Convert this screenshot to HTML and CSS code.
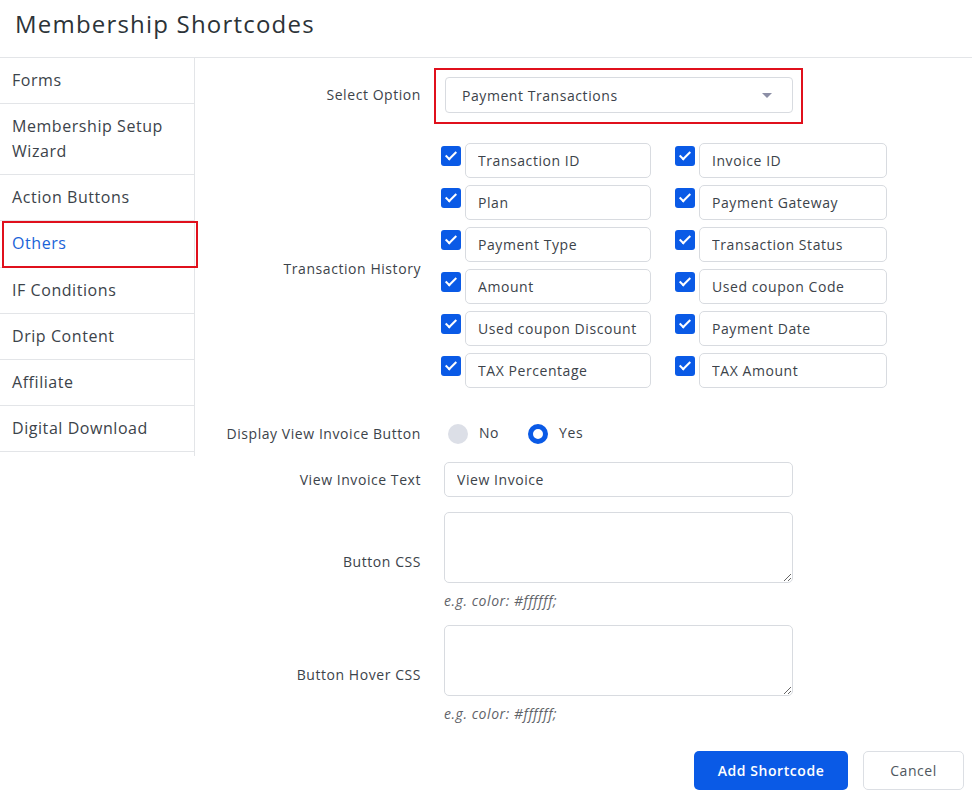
FILE: index.html
```html
<!DOCTYPE html>
<html>
<head>
    <title>Membership Shortcodes</title>
    <link rel="stylesheet" href="styles.css">
</head>
<body>
    <div class="header">
        <h1>Membership Shortcodes</h1>
    </div>
    <div class="layout">
        <ul class="side-menu">
            <li>Forms</li>
            <li>Membership Setup Wizard</li>
            <li>Action Buttons</li>
            <li class="active">Others</li>
            <li>IF Conditions</li>
            <li>Drip Content</li>
            <li>Affiliate</li>
            <li>Digital Download</li>
        </ul>

        <div class="panel">
            <div class="row">
                <label class="row-label">Select Option</label>
                <div class="field">
                    <div class="highlight">
                        <div class="select">
                            <span>Payment Transactions</span>
                            <span class="arrow"></span>
                        </div>
                    </div>
                </div>
            </div>

            <div class="row row-history">
                <label class="row-label">Transaction History</label>
                <div class="field">
                    <div class="check-grid">
                        <div class="check-item"><span class="checkbox"></span><input type="text" value="Transaction ID"></div>
                        <div class="check-item"><span class="checkbox"></span><input type="text" value="Invoice ID"></div>
                        <div class="check-item"><span class="checkbox"></span><input type="text" value="Plan"></div>
                        <div class="check-item"><span class="checkbox"></span><input type="text" value="Payment Gateway"></div>
                        <div class="check-item"><span class="checkbox"></span><input type="text" value="Payment Type"></div>
                        <div class="check-item"><span class="checkbox"></span><input type="text" value="Transaction Status"></div>
                        <div class="check-item"><span class="checkbox"></span><input type="text" value="Amount"></div>
                        <div class="check-item"><span class="checkbox"></span><input type="text" value="Used coupon Code"></div>
                        <div class="check-item"><span class="checkbox"></span><input type="text" value="Used coupon Discount"></div>
                        <div class="check-item"><span class="checkbox"></span><input type="text" value="Payment Date"></div>
                        <div class="check-item"><span class="checkbox"></span><input type="text" value="TAX Percentage"></div>
                        <div class="check-item"><span class="checkbox"></span><input type="text" value="TAX Amount"></div>
                    </div>
                </div>
            </div>

            <div class="row row-radio">
                <label class="row-label">Display View Invoice Button</label>
                <div class="field radios">
                    <span class="radio"></span><span class="radio-text">No</span>
                    <span class="radio checked"></span><span class="radio-text">Yes</span>
                </div>
            </div>

            <div class="row row-text">
                <label class="row-label">View Invoice Text</label>
                <div class="field">
                    <input type="text" class="wide" value="View Invoice">
                </div>
            </div>

            <div class="row row-area">
                <label class="row-label">Button CSS</label>
                <div class="field">
                    <textarea></textarea>
                    <p class="hint">e.g. color: #ffffff;</p>
                </div>
            </div>

            <div class="row row-area">
                <label class="row-label">Button Hover CSS</label>
                <div class="field">
                    <textarea></textarea>
                    <p class="hint">e.g. color: #ffffff;</p>
                </div>
            </div>

            <div class="actions">
                <button class="btn-primary">Add Shortcode</button>
                <button class="btn-default">Cancel</button>
            </div>
        </div>
    </div>
</body>
</html>
```

FILE: styles.css
```css
body { margin: 0; font-family: "Open Sans", "Noto Sans", sans-serif; letter-spacing: 0.035em; color: #3c434a; background: #fff; }
.header { border-bottom: 1px solid #e3e5e8; height: 57px; }
.header h1 { margin: 0; padding: 7px 15px 0; font-size: 24px; font-weight: 400; line-height: 34px; letter-spacing: 0.05em; color: #2c3338; }

.layout { display: flex; align-items: flex-start; }

.side-menu { list-style: none; margin: 0; padding: 0 0 4px; width: 194px; border-right: 1px solid #e3e5e8; flex-shrink: 0; }
.side-menu li { position: relative; padding: 10px 12px; font-size: 16px; line-height: 25px; border-bottom: 1px solid #e3e5e8; color: #3c434a; }
.side-menu li.active { color: #1a63d8; padding-bottom: 11px; }
.side-menu li.active::after { content: ""; position: absolute; left: 2px; top: 0; right: -4px; bottom: -1px; border: 2px solid #e0101c; }

.panel { flex: 1; padding: 10px 8px 0 0; }
.row { display: grid; grid-template-columns: 226px 1fr; column-gap: 23px; align-items: center; }
.row-label { text-align: right; font-size: 14px; color: #3c434a; }
.field { min-width: 0; }

.highlight { display: inline-block; margin-left: -10px; padding: 7px 8px 9px 9px; border: 2px solid #e0101c; }
.select { width: 348px; height: 36px; box-sizing: border-box; border: 1px solid #d8dbe0; border-radius: 4px; padding: 0 16px; display: flex; align-items: center; justify-content: space-between; font-size: 14px; }
.arrow { width: 0; height: 0; border-left: 5px solid transparent; border-right: 5px solid transparent; border-top: 5px solid #8c8fa6; margin-right: 4px; }
.row:first-child .row-label { padding-bottom: 4px; }

.row-history { margin-top: 19px; }
.row-history .row-label { padding-top: 6px; }
.check-grid { margin-left: -3px; display: grid; grid-template-columns: 210px 212px; column-gap: 24px; row-gap: 7px; }
.check-item { display: flex; align-items: flex-start; gap: 4px; }
.checkbox { width: 20px; height: 20px; margin-top: 3px; border-radius: 3px; background: #0a5ae6; flex-shrink: 0; position: relative; }
.checkbox::after { content: ""; position: absolute; left: 7px; top: 3px; width: 4px; height: 9px; border: solid #fff; border-width: 0 2.5px 2.5px 0; transform: rotate(45deg); }

input[type="text"], textarea { font-family: inherit; letter-spacing: inherit; font-size: 14px; color: #3c434a; border: 1px solid #d8dbe0; border-radius: 5px; box-sizing: border-box; background: #fff; }
.check-item input { width: 100%; height: 35px; padding: 0 12px; }

.row-radio { margin-top: 28px; height: 35px; }
.radios { display: flex; align-items: center; padding-left: 4px; }
.radio { width: 20px; height: 20px; border-radius: 50%; background: #dcdfe7; box-sizing: border-box; }
.radio.checked { background: #fff; border: 5px solid #0a5ae6; }
.radio-text { font-size: 14px; margin: -3px 29px 0 11px; }

.row-text { margin-top: 11px; }
.wide { width: 349px; height: 35px; padding: 0 12px; }

.row-area { margin-top: 15px; }
.row-area + .row-area { margin-top: 14px; }
textarea { display: block; width: 349px; height: 71px; resize: vertical; }
.hint { margin: 8px 0 0; font-size: 14px; line-height: 20px; font-style: italic; color: #5f6369; }

.actions { display: flex; justify-content: flex-end; gap: 15px; margin-top: 27px; }
.actions button { height: 39px; border-radius: 5px; font-family: inherit; letter-spacing: inherit; font-size: 14px; cursor: pointer; }
.btn-primary { width: 154px; background: #0a5ae6; color: #fff; border: none; font-weight: 600; }
.btn-default { width: 101px; background: #fff; color: #50575e; border: 1px solid #dcdfe4; font-weight: 500; }
```
